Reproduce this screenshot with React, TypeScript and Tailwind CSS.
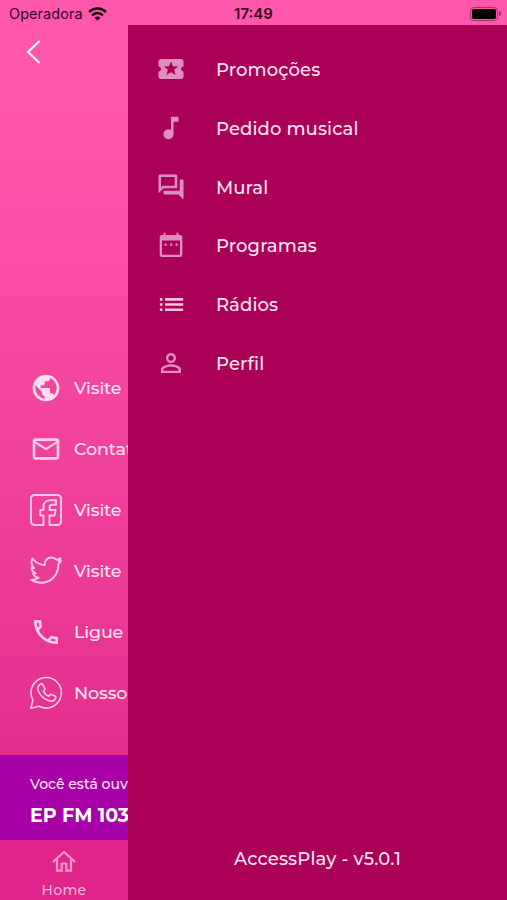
import type { ReactNode } from "react";
import {
  MdLocalActivity,
  MdMusicNote,
  MdOutlineQuestionAnswer,
  MdList,
  MdPersonOutline,
  MdPublic,
  MdMailOutline,
  MdOutlineCall,
} from "react-icons/md";

type Item = { label: string; icon: ReactNode };

function FacebookIcon() {
  return (
    <svg width="34" height="34" viewBox="-1 -1 34 34" fill="none" stroke="currentColor" strokeWidth="1.9" strokeLinejoin="round">
      <path d="M13.5 31H4.5A3.5 3.5 0 0 1 1 27.5v-23A3.5 3.5 0 0 1 4.5 1h23A3.5 3.5 0 0 1 31 4.5v23a3.5 3.5 0 0 1-3.5 3.5h-8V21.500h5l1-5.500h-6v-2.500c0-1.700 1-2.800 2.700-2.800H26V6.200h-5.500c-4 0-7 2.500-7 6.300V16h-3.200v5.500h3.200z" />
    </svg>
  );
}

function TwitterIcon() {
  return (
    <svg width="34" height="34" viewBox="-1 -1 34 34" fill="none" stroke="currentColor" strokeWidth="1.9" strokeLinejoin="round">
      <path d="M2.500 3.500c3 3.800 7 6.200 12.300 6.600-.6-4.600 2.700-7.600 6.500-7.600 2.200 0 3.800.8 5.100 2.200 1.600-.3 2.900-.8 4.100-1.500-.4 1.300-1 2.200-1.800 2.900l2.200-.3c-.7 1.300-1.500 2.500-2.600 3.400.3 10.200-7 18.500-17.300 18.500-3.700 0-7.100-1-10-2.800 3 .1 5.400-.6 7.500-2.200-2.700-.3-4.500-1.800-5.300-4.200l2.500-.1C3 17.400 1.600 15.400 1.600 12.600l2.500.6C1.400 10.700.9 7 2.500 3.500z" />
    </svg>
  );
}

function WhatsappIcon() {
  return (
    <svg width="34" height="34" viewBox="-1 -1 34 34" fill="none" stroke="currentColor" strokeWidth="1.600" strokeLinejoin="round">
      <path d="M.8 31.200l2.100-8A15.200 15.200 0 1 1 9 29.200z" />
      <path d="M10.300 7.200c.8-.6 1.900-.4 2.400.4l2 3.500c.4.700.2 1.400-.3 1.900l-1.100 1.200c1 2.200 2.800 4 5.300 5.100l1.400-1.400c.5-.5 1.200-.6 1.800-.3l3.300 1.700c.8.400.9 1.300.5 2-1.500 2.700-4.500 3.400-7.200 2.300-4.700-1.900-8.200-5.200-10.100-9.600-1-2.600-.4-5.200 2-6.800z" />
    </svg>
  );
}

function CalendarIcon() {
  return (
    <svg width="26" height="26" viewBox="0 0 26 26" fill="currentColor">
      <path fillRule="evenodd" d="M5.500 .7h2V3h11V.7h2V3h1.500A2.300 2.300 0 0 1 24.300 5.300v17.400a2.300 2.300 0 0 1-2.300 2.300H4A2.300 2.300 0 0 1 1.700 22.700V5.300A2.300 2.300 0 0 1 4 3h1.500zM4 8.500v14.200h18V8.500z" />
      <path d="M6.500 11.500h2.200v2.200H6.500zM12 11.500h2.200v2.200H12zM17.500 11.500h2.200v2.200h-2.200z" />
    </svg>
  );
}

function HomeIcon() {
  return (
    <svg width="24" height="24" viewBox="0 0 24 24" fill="none" stroke="currentColor" strokeWidth="2.200">
      <path d="M1 13L12 3l11 10" />
      <path d="M5 10.500v11.200h4.700v-7.200h4.600v7.200H19V10.500" />
    </svg>
  );
}

const links: Item[] = [
  { label: "Visite nosso site", icon: <MdPublic size={32} className="text-[#ffdcef]" /> },
  { label: "Contato por e-mail", icon: <MdMailOutline size={32} /> },
  { label: "Visite nosso Facebook", icon: <FacebookIcon /> },
  { label: "Visite nosso Twitter", icon: <TwitterIcon /> },
  { label: "Ligue para nós", icon: <MdOutlineCall size={32} /> },
  { label: "Nosso WhatsApp", icon: <WhatsappIcon /> },
];

const menu: Item[] = [
  { label: "Promoções", icon: <MdLocalActivity size={30} /> },
  { label: "Pedido musical", icon: <MdMusicNote size={30} /> },
  { label: "Mural", icon: <MdOutlineQuestionAnswer size={30} /> },
  { label: "Programas", icon: <CalendarIcon /> },
  { label: "Rádios", icon: <MdList size={31} className="text-[#f2c4dd]" /> },
  { label: "Perfil", icon: <MdPersonOutline size={30} /> },
];

function StatusBar() {
  return (
    <div className="grid h-[25px] grid-cols-3 items-center pt-[2px] font-['Inter',sans-serif] text-[14px] text-[#35051f]">
      <div className="flex items-center gap-[6px] pl-[9px]">
        <span className="w-[73px] text-[14.500px] tracking-[0.050px] whitespace-nowrap">Operadora</span>
        <svg width="19" height="14" viewBox="0 0 19 14" fill="none" stroke="#16000c" strokeWidth="2.500">
          <path d="M1 5a12.200 12.200 0 0 1 17 0M4.100 8.300a7.700 7.700 0 0 1 10.800 0" />
          <path d="M9.500 13.800L6.500 10.700a4.200 4.200 0 0 1 6 0z" fill="#16000c" stroke="none" />
        </svg>
      </div>
      <span className="pt-px text-center text-[15px] font-semibold">17:49</span>
      <div className="flex items-center justify-end gap-px pr-[6px]">
        <div className="h-[14px] w-[28px] rounded-[4px] border border-[#a1366c] p-px">
          <div className="h-full rounded-[2px] bg-black" />
        </div>
        <div className="h-[5px] w-[2px] rounded-r bg-[#a1366c]" />
      </div>
    </div>
  );
}

export default function App() {
  return (
    <div className="relative flex h-[900px] w-[507px] flex-col overflow-hidden bg-linear-to-b from-[#ff57aa] from-10% to-[#df2288] font-['Montserrat','Inter',sans-serif] text-[#ffe3f3]">
      <StatusBar />
      <header className="pt-[14px] pl-[26px]">
        <svg width="16" height="26" viewBox="0 0 16 26" fill="none" stroke="#fff" strokeWidth="2">
          <path d="M13.500 2L2 13l11.500 11" />
        </svg>
      </header>

      <ul className="mt-auto mb-[31px]">
        {links.map((item) => (
          <li key={item.label} className="flex h-[61px] items-center gap-[11px] pl-[29px] whitespace-nowrap">
            <span className="mb-[2px] flex w-[34px] justify-center text-[#ffcbe7]">{item.icon}</span>
            <span className="text-[17.500px] font-medium tracking-[-0.150px] [word-spacing:4px]">{item.label}</span>
          </li>
        ))}
      </ul>

      <div className="h-[85px] shrink-0 bg-[#a700a8] pt-[19px] pl-[30px] whitespace-nowrap">
        <p className="text-[14px] leading-[20px] font-medium">Você está ouvindo</p>
        <p className="mt-[9px] text-[19px] leading-[26px] font-bold text-white">EP FM 103,1</p>
      </div>

      <nav className="flex h-[60px] shrink-0 flex-col bg-[#df258b]">
        <div className="flex w-[128px] flex-col items-center pt-[9px] text-[#ff97cd]">
          <HomeIcon />
          <span className="mt-[7px] text-[14px] leading-[20px] font-medium tracking-[0.350px] text-[#ffb2dc]">Home</span>
        </div>
      </nav>

      <aside className="absolute top-[25px] right-0 bottom-0 flex w-[379px] flex-col bg-[#aa0056] pt-[15px]">
        <ul>
          {menu.map((item) => (
            <li key={item.label} className="flex h-[58.700px] items-center gap-[29px] pl-[27px]">
              <span className="flex w-[32px] justify-center text-[#df8fbd]">{item.icon}</span>
              <span className="pt-[2.800px] text-[18px] font-medium tracking-[0.120px]">{item.label}</span>
            </li>
          ))}
        </ul>
        <p className="mt-auto mb-[27px] text-center text-[18px] leading-[28px] font-medium tracking-[0.150px]">AccessPlay - v5.0.1</p>
      </aside>
    </div>
  );
}
